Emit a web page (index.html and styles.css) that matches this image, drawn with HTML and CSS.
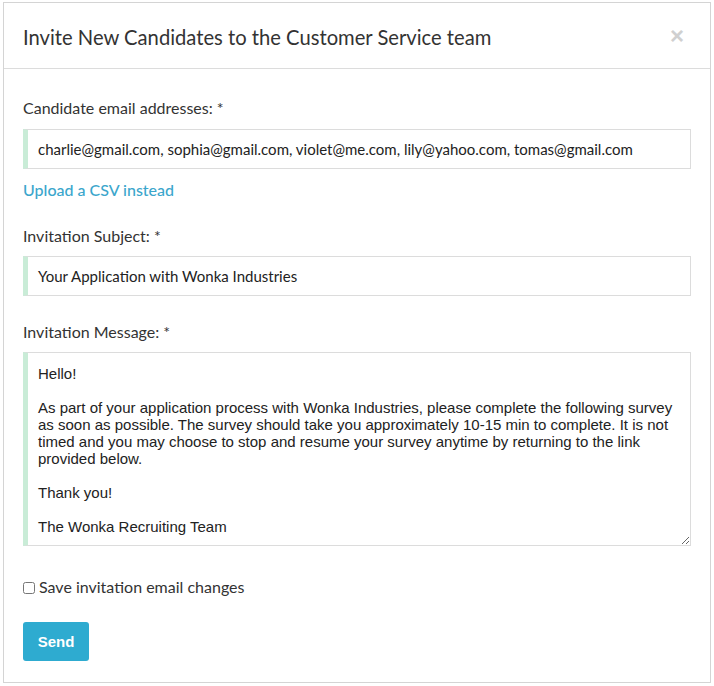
FILE: index.html
```html
<!DOCTYPE html>
<html>
<head>
<meta charset="utf-8">
<link rel="stylesheet" href="styles.css">
</head>
<body>
<div class="modal">
  <div class="modal-header">
    <h4 class="modal-title">Invite New Candidates to the Customer Service team</h4>
    <span class="close">×</span>
  </div>
  <div class="modal-body">
    <label class="field-label">Candidate email addresses: *</label>
    <div class="input">charlie@gmail.com, sophia@gmail.com, violet@me.com, lily@yahoo.com, tomas@gmail.com</div>
    <a class="link">Upload a CSV instead</a>
    <label class="field-label gap">Invitation Subject: *</label>
    <div class="input">Your Application with Wonka Industries</div>
    <label class="field-label gap">Invitation Message: *</label>
    <textarea class="textarea">Hello!

As part of your application process with Wonka Industries, please complete the following survey as soon as possible. The survey should take you approximately 10-15 min to complete. It is not timed and you may choose to stop and resume your survey anytime by returning to the link provided below.

Thank you!

The Wonka Recruiting Team</textarea>
    <label class="check-row"><input type="checkbox" class="check"><span>Save invitation email changes</span></label>
    <button class="btn">Send</button>
  </div>
</div>
</body>
</html>
```

FILE: styles.css
```css
html, body {
  margin: 0;
  padding: 0;
  background: #fff;
}
body {
  padding: 2px 0 0 3px;
  font-family: Lato, "Liberation Sans", sans-serif;
  color: #333;
}
.modal {
  width: 708px;
  height: 681px;
  box-sizing: border-box;
  border: 1px solid #d4d4d4;
  background: #fff;
}
.modal-header {
  height: 66px;
  box-sizing: border-box;
  border-bottom: 1px solid #dcdcdc;
  display: flex;
  align-items: center;
  justify-content: space-between;
  padding: 0 26px 0 19px;
}
.modal-title {
  margin: 0;
  font-size: 20.2px;
  font-weight: 400;
  color: #333;
  line-height: 24px;
  padding-top: 2px;
}
.close {
  font-family: "Liberation Sans", sans-serif;
  font-size: 24px;
  font-weight: 700;
  color: #d0d0d0;
  line-height: 1;
}
.modal-body {
  padding: 29px 19px 20px 19px;
  display: flex;
  flex-direction: column;
  align-items: flex-start;
}
.field-label {
  display: block;
  font-size: 16px;
  line-height: 20px;
  margin-bottom: 11px;
  color: #333;
}
.field-label.gap {
  margin-top: 26px;
  margin-bottom: 10px;
}
.input {
  width: 668px;
  height: 40px;
  box-sizing: border-box;
  border: 1px solid #dcdcdc;
  border-left: 5px solid #c9ecd7;
  padding: 0 10px;
  display: flex;
  align-items: center;
  font-size: 15px;
  color: #222;
  white-space: nowrap;
  overflow: hidden;
}
.link {
  display: block;
  margin-top: 11px;
  font-size: 16px;
  line-height: 20px;
  color: #3ba6cc;
  font-weight: 500;
  cursor: pointer;
}
.textarea {
  display: block;
  width: 668px;
  height: 194px;
  box-sizing: border-box;
  border: 1px solid #dcdcdc;
  border-left: 5px solid #c9ecd7;
  border-radius: 0;
  padding: 12px 10px 8px 10px;
  margin: 0;
  font-family: "Liberation Sans", Arial, sans-serif;
  font-size: 15px;
  line-height: 17px;
  color: #222;
  resize: vertical;
  outline: none;
}
.check-row {
  display: flex;
  align-items: center;
  margin-top: 31px;
  font-size: 16px;
  line-height: 20px;
  color: #333;
}
.check {
  width: 12px;
  height: 12px;
  margin: 2px 4px 0 0;
}
.btn {
  margin-top: 25px;
  width: 66px;
  height: 39px;
  border: none;
  border-radius: 3px;
  background: #2eabd0;
  color: #fff;
  font-family: "Liberation Sans", Arial, sans-serif;
  font-size: 15px;
  font-weight: 700;
  padding: 0;
}
```
